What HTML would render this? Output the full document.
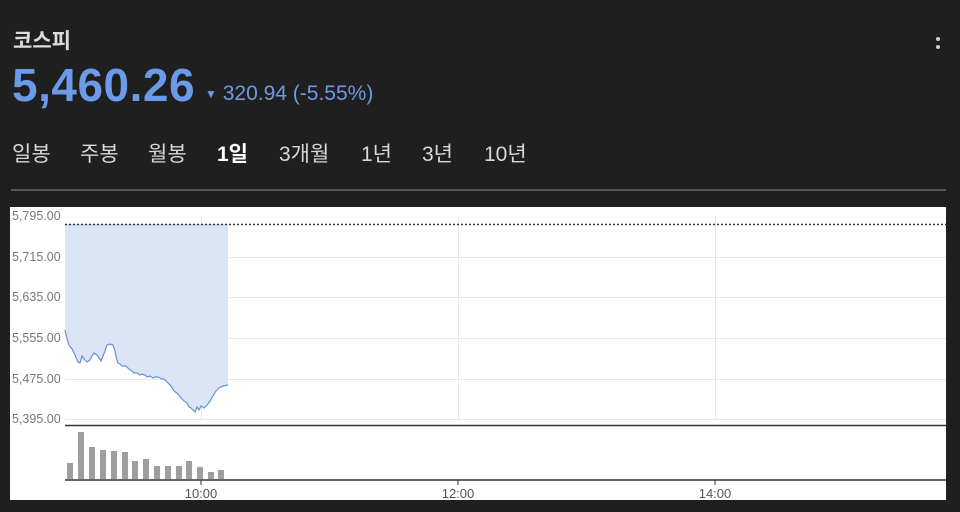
<!DOCTYPE html>
<html><head><meta charset="utf-8"><style>
body{margin:0;width:960px;height:512px;background:#1f1f1f;font-family:"Liberation Sans","Noto Sans CJK KR",sans-serif;overflow:hidden;position:relative}
.t{position:absolute;color:#e8e8e8;white-space:nowrap}
.tabs span{position:absolute;white-space:nowrap}
</style></head><body>
<div class="t" style="left:13px;top:25px;font-size:21px;font-weight:bold;color:#dcdcdc">코스피</div>
<div class="t" style="left:12px;top:58px;font-size:46px;font-weight:bold;color:#6b9be8;letter-spacing:0.5px">5,460.26</div>
<div class="t" style="left:205px;top:82px;font-size:21px;color:#6b9be8"><span style="font-size:12px;position:relative;top:-2px">▼</span> 320.94 (-5.55%)</div>
<div style="position:absolute;left:936px;top:37px;width:4px;height:4px;border-radius:2px;background:#ccc"></div>
<div style="position:absolute;left:936px;top:45px;width:4px;height:4px;border-radius:2px;background:#ccc"></div>
<div class="t tabs" style="left:12px;top:138px;font-size:21px;color:#d8d8d8">
<span style="left:0">일봉</span><span style="left:68px">주봉</span><span style="left:136px">월봉</span><span style="left:205px;font-weight:bold;color:#fff">1일</span><span style="left:267px">3개월</span><span style="left:349px">1년</span><span style="left:410px">3년</span><span style="left:472px">10년</span></div>
<div style="position:absolute;left:11px;top:189px;width:935px;height:2px;background:#555"></div>
<svg style="position:absolute;left:0;top:0" width="960" height="512">
<rect x="10" y="207" width="936" height="293" fill="#fff"/>
<g stroke="#e8e8e8" stroke-width="1">
<line x1="65" y1="257.5" x2="946" y2="257.5"/><line x1="65" y1="297.5" x2="946" y2="297.5"/><line x1="65" y1="338.5" x2="946" y2="338.5"/><line x1="65" y1="379.5" x2="946" y2="379.5"/><line x1="65" y1="419.5" x2="946" y2="419.5"/>
<line x1="201.5" y1="216" x2="201.5" y2="420"/><line x1="458.5" y1="216" x2="458.5" y2="420"/><line x1="715.5" y1="216" x2="715.5" y2="420"/>
</g>
<polygon fill="#dbe5f6" points="65,224 228,224 228,385 223,386 219,388 216,391 213,396 210,401 207,405 204,408 201,406 199,410 197,407 195,412 193,410 191,408 189,407 187,403 184,401 181,398 178,394 174,391 171,386 168,383 166,381 164,379 162,379 160,378 158,377 155,377 153,378 150,376 147,377 145,375 142,374 140,375 137,373 134,373 132,371 130,370 127,367 125,366 122,366 120,364 118,363 116,357 115,351 113,345 110,344 107,345 105,351 103,356 101,361 99,358 97,355 94,353 92,356 90,360 87,362 84,359 82,356 80,363 78,362 75,355 72,349 69,345 67,339 65,330"/>
<polyline fill="none" stroke="#6a8fd8" stroke-width="1.2" points="65,330 67,339 69,345 72,349 75,355 78,362 80,363 82,356 84,359 87,362 90,360 92,356 94,353 97,355 99,358 101,361 103,356 105,351 107,345 110,344 113,345 115,351 116,357 118,363 120,364 122,366 125,366 127,367 130,370 132,371 134,373 137,373 140,375 142,374 145,375 147,377 150,376 153,378 155,377 158,377 160,378 162,379 164,379 166,381 168,383 171,386 174,391 178,394 181,398 184,401 187,403 189,407 191,408 193,410 195,412 197,407 199,410 201,406 204,408 207,405 210,401 213,396 216,391 219,388 223,386 228,385"/>
<line x1="65" y1="224.5" x2="946" y2="224.5" stroke="#333" stroke-width="1.5" stroke-dasharray="2,2"/>
<line x1="65" y1="425.5" x2="946" y2="425.5" stroke="#333" stroke-width="1.5"/>
<line x1="65" y1="480" x2="946" y2="480" stroke="#333" stroke-width="1.5"/>
<g fill="#9e9e9e">
<rect x="67" y="463" width="6" height="16"/><rect x="78" y="432" width="6" height="47"/><rect x="89" y="447" width="6" height="32"/><rect x="100" y="450" width="6" height="29"/><rect x="111" y="451" width="6" height="28"/><rect x="122" y="452" width="6" height="27"/><rect x="132" y="461" width="6" height="18"/><rect x="143" y="459" width="6" height="20"/><rect x="154" y="466" width="6" height="13"/><rect x="165" y="466" width="6" height="13"/><rect x="176" y="466" width="6" height="13"/><rect x="186" y="461" width="6" height="18"/><rect x="197" y="467" width="6" height="12"/><rect x="208" y="472" width="6" height="7"/><rect x="218" y="470" width="6" height="9"/>
</g>
<g stroke="#333"><line x1="201" y1="480" x2="201" y2="485"/><line x1="458" y1="480" x2="458" y2="485"/><line x1="715" y1="480" x2="715" y2="485"/></g>
<g font-family="Liberation Sans,sans-serif" font-size="12.5" fill="#777">
<text x="12" y="220">5,795.00</text><text x="12" y="261">5,715.00</text><text x="12" y="301">5,635.00</text><text x="12" y="342">5,555.00</text><text x="12" y="383">5,475.00</text><text x="12" y="423">5,395.00</text>
<text x="201" y="498" text-anchor="middle" fill="#555" font-size="13">10:00</text><text x="458" y="498" text-anchor="middle" fill="#555" font-size="13">12:00</text><text x="715" y="498" text-anchor="middle" fill="#555" font-size="13">14:00</text>
</g>
</svg>
</body></html>
